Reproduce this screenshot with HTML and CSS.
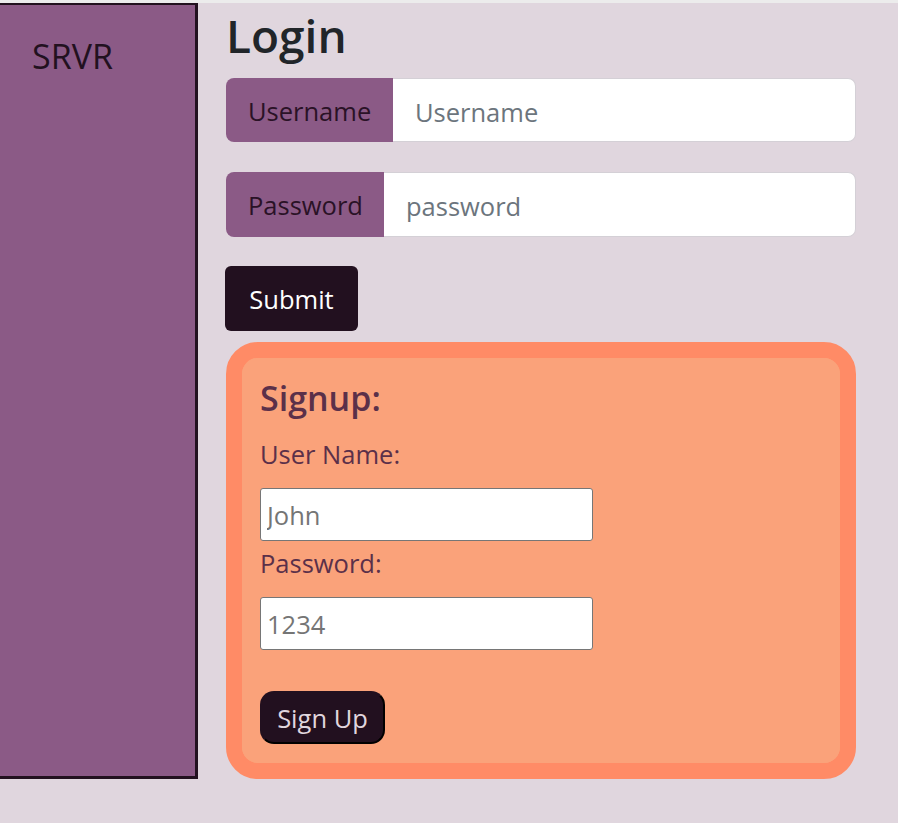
FILE: index.html
```html
<!DOCTYPE html>
<html>
<head>
<meta charset="utf-8">
<title>SRVR Login</title>
<link rel="stylesheet" href="styles.css">
</head>
<body>
<div class="topstrip"></div>
<div class="layout">
  <aside class="sidebar">
    <div class="brand">SRVR</div>
  </aside>
  <main class="main">
    <h1 class="title">Login</h1>
    <div class="group">
      <span class="group-label lbl-user">Username</span>
      <input class="group-input" type="text" placeholder="Username">
    </div>
    <div class="group group-2">
      <span class="group-label lbl-pass">Password</span>
      <input class="group-input" type="password" placeholder="password">
    </div>
    <button class="submit">Submit</button>
    <section class="signup">
      <div class="signup-inner">
        <h3 class="signup-title">Signup:</h3>
        <label class="field-label">User Name:</label>
        <input class="field" type="text" placeholder="John">
        <label class="field-label">Password:</label>
        <input class="field" type="text" placeholder="1234">
        <button class="signup-btn">Sign Up</button>
      </div>
    </section>
  </main>
</div>
</body>
</html>
```
FILE: styles.css
```css
* { box-sizing: border-box; }
html, body {
  margin: 0;
  padding: 0;
  background: #e0d6de;
  font-family: "Open Sans", "Noto Sans", sans-serif;
  font-size: 25.5px;
  color: #212529;
}
.topstrip {
  height: 3px;
  background: #ececec;
}
.layout {
  display: flex;
  align-items: stretch;
}
.sidebar {
  flex: 0 0 198px;
  background: #8b5a86;
  border-style: solid;
  border-color: #22111f;
  border-width: 2px 3px 3px 0;
  padding: 31px 0 0 32px;
}
.brand {
  font-size: 34px;
  line-height: 40px;
  color: #22111f;
}
.main {
  flex: 0 0 630px;
  margin-left: 28px;
}
.title {
  margin: 4px 0 15px;
  font-size: 46px;
  line-height: 56px;
  font-weight: 600;
  color: #212529;
}
.group {
  display: flex;
  height: 64px;
}
.group-2 { margin-top: 30px; height: 65px; }
.group-label {
  display: flex;
  align-items: center;
  padding: 1px 22px 0;
  background: #8b5a86;
  color: #2a1226;
  border-radius: 8px 0 0 8px;
}
.lbl-user { width: 167px; }
.lbl-pass { width: 158px; }
.group-input {
  flex: 1;
  min-width: 0;
  border: 1px solid #d4d0d6;
  border-left: none;
  border-radius: 0 8px 8px 0;
  background: #fff;
  padding: 3px 22px 0;
  font: inherit;
  color: #212529;
  outline: none;
}
.group-input::placeholder { color: #6c757d; }
.submit {
  display: block;
  margin-top: 29px;
  margin-left: -1px;
  width: 133px;
  height: 65px;
  padding: 0;
  border: none;
  border-radius: 6px;
  background: #22101f;
  color: #fff;
  font: inherit;
}
.signup {
  margin-top: 11px;
  height: 437px;
  border: 16px solid #ff8b66;
  border-radius: 32px;
  background: #faa27a;
}
.signup-inner {
  height: 100%;
  border-radius: 16px;
  background: #faa27a;
  padding: 20px 18px 0;
  color: #5b3049;
}
.signup-title {
  margin: 0 0 18px;
  font-size: 34px;
  line-height: 40px;
  font-weight: 600;
  color: #5b3049;
}
.field-label {
  display: block;
  line-height: 36px;
  margin-bottom: 16px;
}
.field {
  display: block;
  width: 333px;
  height: 53px;
  margin-bottom: 4px;
  padding: 0 6px;
  border: 1px solid #767676;
  border-radius: 3px;
  background: #fff;
  font: inherit;
  outline: none;
}
.field::placeholder { color: #757575; }
.signup-btn {
  display: block;
  margin-top: 41px;
  width: 125px;
  height: 53px;
  padding: 0;
  border: 2px solid;
  border-color: #22101f #000 #000 #22101f;
  border-radius: 14px;
  background: #22101f;
  color: #e0d6de;
  font: inherit;
}
```
